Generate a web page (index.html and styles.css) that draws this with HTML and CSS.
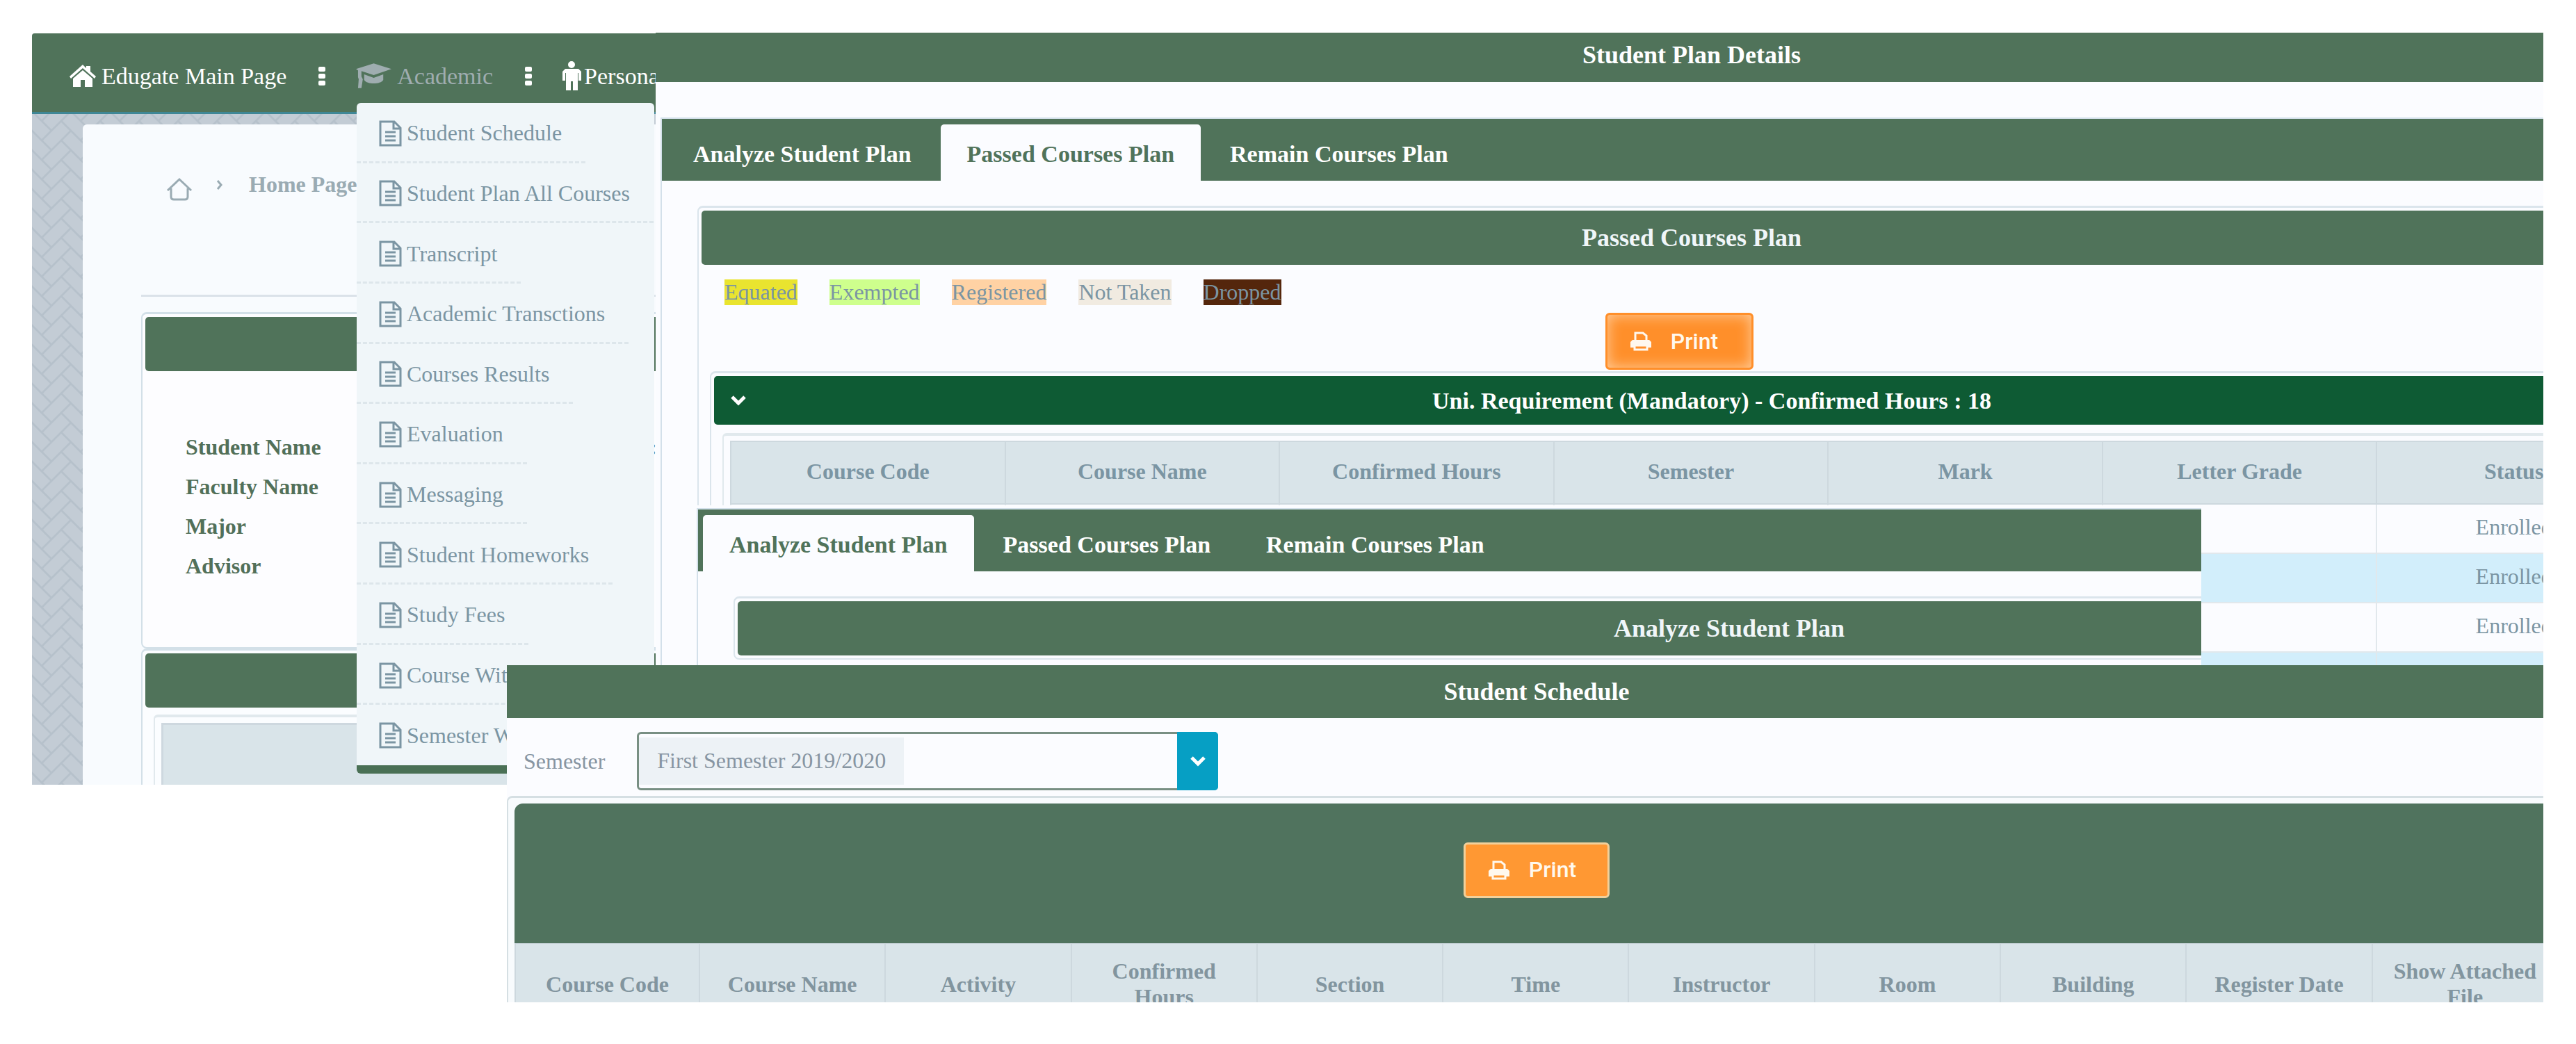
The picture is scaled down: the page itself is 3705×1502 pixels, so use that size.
FILE: index.html
```html
<!DOCTYPE html>
<html lang="en">
<head>
<meta charset="utf-8">
<title>Edugate</title>
<link rel="stylesheet" href="styles.css">
</head>
<body>
<svg class="sprite" aria-hidden="true">
  <symbol id="i-doc" viewBox="0 0 33 38"><path d="M2 2h20l9 9v25H2zM21 2v10h10" fill="none" stroke="currentColor" stroke-width="3"/><path d="M9 17h15M9 23h15M9 29h15" stroke="currentColor" stroke-width="3"/></symbol>
  <symbol id="i-home" viewBox="0 0 38 32"><path d="M19 0 24 5V2h6v8l8 7-2 3L19 5 2 20l-2-3z" fill="currentColor"/><path d="M19 8 33 20v12H22V22h-6v10H5V20z" fill="currentColor"/></symbol>
  <symbol id="i-cap" viewBox="0 0 52 36"><path d="M26 0 52 8 26 17 8 11v8l2 4-2 13H3l1-13-1-3V10L0 8z" fill="currentColor"/><path d="M12 16l14 5 14-5v8c-4 7-24 7-28 0z" fill="currentColor"/></symbol>
  <symbol id="i-man" viewBox="0 0 27 42"><circle cx="13" cy="5" r="5" fill="currentColor"/><path d="M4 11h19l4 4v13h-4V17h-1v25h-7V29h-3v13H5V17H4v11H0V15z" fill="currentColor"/></symbol>
  <symbol id="i-print" viewBox="0 0 30 28"><path d="M7 13V2h11l5 4v7" fill="none" stroke="currentColor" stroke-width="3"/><path d="M3 12h24l3 3v8h-5v-4H5v4H0v-8z" fill="currentColor"/><path d="M6 20h18v6H6z" fill="none" stroke="currentColor" stroke-width="3"/></symbol>
  <symbol id="i-down" viewBox="0 0 24 16"><path d="M3 3l9 9 9-9" fill="none" stroke="currentColor" stroke-width="5"/></symbol>
</svg>
<main class="desktop">

  <section class="win win-portal">
    <nav class="topnav">
      <a href="#"><svg class="ic-home"><use href="#i-home"/></svg>Edugate Main Page</a>
      <span class="dots"><i></i><i></i><i></i></span>
      <a href="#" class="current"><svg class="ic-cap"><use href="#i-cap"/></svg>Academic</a>
      <span class="dots"><i></i><i></i><i></i></span>
      <a href="#" class="tight"><svg class="ic-man"><use href="#i-man"/></svg>Personal</a>
    </nav>
    <div class="sheet">
      <div class="crumbs">
        <svg class="ic-crumb" viewBox="0 0 38 34"><path d="M2 19 19 3l17 16M7 16v12q0 4 4 4h16q4 0 4-4V16" fill="none" stroke="currentColor" stroke-width="3"/></svg>
        <svg class="ic-sep" viewBox="0 0 10 16"><path d="M2 2l5 6-5 6" fill="none" stroke="currentColor" stroke-width="3"/></svg>
        <a href="#">Home Page</a>
      </div>
      <div class="frame frame-info">
        <div class="bar"></div>
        <table class="info">
          <tr><th scope="row">Student Name</th><td>:</td></tr>
          <tr><th scope="row">Faculty Name</th><td></td></tr>
          <tr><th scope="row">Major</th><td></td></tr>
          <tr><th scope="row">Advisor</th><td></td></tr>
        </table>
      </div>
      <div class="frame frame-list">
        <div class="bar"></div>
        <div class="subframe"><div class="blank-head"></div></div>
      </div>
    </div>
    <ul class="menu">
      <li><a href="#"><svg><use href="#i-doc"/></svg>Student Schedule</a></li>
      <li><a href="#"><svg><use href="#i-doc"/></svg>Student Plan All Courses</a></li>
      <li><a href="#"><svg><use href="#i-doc"/></svg>Transcript</a></li>
      <li><a href="#"><svg><use href="#i-doc"/></svg>Academic Transctions</a></li>
      <li><a href="#"><svg><use href="#i-doc"/></svg>Courses Results</a></li>
      <li><a href="#"><svg><use href="#i-doc"/></svg>Evaluation</a></li>
      <li><a href="#"><svg><use href="#i-doc"/></svg>Messaging</a></li>
      <li><a href="#"><svg><use href="#i-doc"/></svg>Student Homeworks</a></li>
      <li><a href="#"><svg><use href="#i-doc"/></svg>Study Fees</a></li>
      <li><a href="#"><svg><use href="#i-doc"/></svg>Course Withdraw</a></li>
      <li><a href="#"><svg><use href="#i-doc"/></svg>Semester Withdraw</a></li>
    </ul>
  </section>

  <section class="win win-plan">
    <div class="plan-page">
      <h1 class="title">Student Plan Details</h1>
      <div class="tabbox">
        <div class="tabs" role="tablist">
          <button role="tab" aria-selected="false">Analyze Student Plan</button>
          <button role="tab" aria-selected="true">Passed Courses Plan</button>
          <button role="tab" aria-selected="false">Remain Courses Plan</button>
        </div>
        <div class="tabpane">
          <div class="frame">
            <h2 class="bar">Passed Courses Plan</h2>
            <div class="legend">
              <span class="l-equated">Equated</span>
              <span class="l-exempted">Exempted</span>
              <span class="l-registered">Registered</span>
              <span class="l-nottaken">Not Taken</span>
              <span class="l-dropped">Dropped</span>
            </div>
            <div class="actions"><button class="print glow"><svg><use href="#i-print"/></svg>Print</button></div>
            <div class="frame group">
              <h3 class="group-title"><svg><use href="#i-down"/></svg><span>Uni. Requirement (Mandatory) - Confirmed Hours : 18</span></h3>
              <div class="subframe">
                <table class="grid">
                  <thead><tr><th>Course Code</th><th>Course Name</th><th>Confirmed Hours</th><th>Semester</th><th>Mark</th><th>Letter Grade</th><th>Status</th></tr></thead>
                  <tbody>
                    <tr><td></td><td></td><td></td><td></td><td></td><td></td><td>Enrolled</td></tr>
                    <tr><td></td><td></td><td></td><td></td><td></td><td></td><td>Enrolled</td></tr>
                    <tr><td></td><td></td><td></td><td></td><td></td><td></td><td>Enrolled</td></tr>
                    <tr><td></td><td></td><td></td><td></td><td></td><td></td><td></td></tr>
                  </tbody>
                </table>
              </div>
            </div>
          </div>
        </div>
      </div>
    </div>
  </section>

  <section class="win win-analyze">
    <div class="analyze-page">
      <div class="tabbox">
        <div class="tabs" role="tablist">
          <button role="tab" aria-selected="true">Analyze Student Plan</button>
          <button role="tab" aria-selected="false">Passed Courses Plan</button>
          <button role="tab" aria-selected="false">Remain Courses Plan</button>
        </div>
        <div class="tabpane">
          <div class="frame"><h2 class="bar">Analyze Student Plan</h2></div>
        </div>
      </div>
    </div>
  </section>

  <section class="win win-schedule">
    <div class="schedule-page">
      <h1 class="bar title-schedule">Student Schedule</h1>
      <div class="filter">
        <label for="sem">Semester</label>
        <div class="picker">
          <select id="sem"><option>First Semester 2019/2020</option></select>
          <span class="picker-arrow"><svg><use href="#i-down"/></svg></span>
        </div>
      </div>
      <div class="schedule-box">
        <div class="toolbar"><button class="print"><svg><use href="#i-print"/></svg>Print</button></div>
        <table class="grid schedule">
          <thead><tr><th>Course Code</th><th>Course Name</th><th>Activity</th><th>Confirmed Hours</th><th>Section</th><th>Time</th><th>Instructor</th><th>Room</th><th>Building</th><th>Register Date</th><th>Show Attached File</th></tr></thead>
        </table>
      </div>
    </div>
  </section>

</main>
</body>
</html>
```

FILE: styles.css
```css
* { box-sizing: border-box; }

body {
  margin: 0;
  background: #fff;
  font: 32px/37px "Liberation Serif", "Times New Roman", serif;
  color: #7b95a3;
}

h1, h2, h3 { margin: 0; }
a { color: inherit; text-decoration: none; }
button { font: inherit; cursor: pointer; }
svg { flex: none; display: block; }
.sprite { position: absolute; width: 0; height: 0; }

.desktop {
  position: relative;
  min-height: 100vh;
  overflow: hidden;
}

.win {
  position: absolute;
  overflow: hidden;
  background: #fbfcff;
}

/* shared pieces */
.bar {
  display: flex;
  align-items: center;
  justify-content: center;
  height: 78px;
  border-radius: 5px;
  background: #50735a;
  color: #f0f6f9;
  font-size: 36px;
  font-weight: bold;
}

.frame {
  padding: 4px;
  border: 2px solid #dbe5ec;
  border-top-width: 3px;
  border-radius: 8px;
}

.subframe {
  padding: 9px;
  border: 2px solid #e1e9ed;
  border-top-width: 4px;
  border-radius: 6px;
}

.print {
  display: flex;
  align-items: center;
  gap: 28px;
  height: 80px;
  padding: 0 45px 0 33px;
  border: 3px solid #f1d09b;
  border-radius: 6px;
  background: #ff9833;
  color: #fff8ee;
  font: 500 32px/37px Roboto, sans-serif;
}
.print svg { width: 30px; height: 28px; }
.print.glow {
  height: 82px;
  padding-right: 48px;
  border-color: #ff8f2a;
  background: #ff8f2a;
  box-shadow: inset 0 0 20px #ffd0a0;
}

/* portal window */
.win-portal {
  left: 46px;
  top: 48px;
  width: 897px;
  height: 1081px;
  background-color: #c3ccd5;
  background-image: url("data:image/svg+xml,%3Csvg xmlns='http://www.w3.org/2000/svg' width='56' height='28' viewBox='0 0 4 2'%3E%3Cpath d='M0 0L2 2L1 3L-1 1zM0-2L2 0L1 1L-1-1zM4 0L6 2L5 3L3 1zM4-2L6 0L5 1L3-1zM3 1L4 2L2 4L1 3zM3-1L4 0L2 2L1 1zM-1 1L0 2' fill='none' stroke='%23b6c1cb' stroke-width='.2'/%3E%3C/svg%3E");
  border-radius: 4px 0 0 0;
}

.topnav {
  display: flex;
  align-items: center;
  height: 116px;
  padding: 9px 0 0 54px;
  border-bottom: 3px solid #3f8796;
  background: #50735a;
  color: #fff;
  font-size: 34px;
  white-space: nowrap;
}
.topnav a { display: flex; align-items: center; gap: 8px; }
.topnav .current { color: #9fadb0; }
.topnav .tight { gap: 4px; }
.ic-home { width: 38px; height: 32px; }
.ic-cap { width: 51px; height: 36px; }
.ic-man { width: 27px; height: 42px; }
.dots { display: grid; gap: 3px; margin: 0 44px 0 46px; }
.dots i { width: 10px; height: 7px; border-radius: 2px; background: #fff; }

.sheet {
  width: 900px;
  height: 950px;
  margin: 15px 0 0 73px;
  padding-left: 84px;
  border-radius: 6px 0 0 0;
  background: #f8fbfe;
}

.crumbs {
  display: flex;
  align-items: center;
  height: 248px;
  padding: 0 0 72px 36px;
  border-bottom: 3px solid #dbe2e9;
  color: #9aabb3;
  font-weight: bold;
}
.ic-crumb { width: 38px; height: 34px; margin-top: 12px; }
.ic-sep { width: 10px; height: 16px; margin: 0 37px 0 34px; }

.frame-info { height: 484px; margin-top: 22px; background: #fdfdff; border-color: #d3e0e8; }
.frame-list { background: #fbfdff; border-color: #d3e0e8; }
.frame-list .subframe { margin: 10px 0 0 12px; padding-top: 8px; }
.blank-head { height: 120px; border: 3px solid #ced8df; background: #d9e4e9; }

.info {
  margin: 81px 0 0 58px;
  border-spacing: 0;
  color: #527059;
}
.info th { width: 667px; height: 57px; padding: 0; text-align: left; }
.info td { padding: 0; font-weight: bold; }

.menu {
  position: absolute;
  left: 467px;
  top: 100px;
  display: grid;
  grid-auto-rows: 1fr;
  width: 428px;
  height: 965px;
  margin: 0;
  padding: 0;
  border-bottom: 12px solid #4a7055;
  border-radius: 6px;
  background: #f0f6f9;
  list-style: none;
}
.menu li { display: flex; }
.menu a {
  display: flex;
  align-items: center;
  gap: 7px;
  padding: 4px 34px 0 32px;
  border-bottom: 3px dashed #dde6eb;
  white-space: nowrap;
}
.menu li:last-child a { border-color: transparent; }
.menu svg { width: 33px; height: 38px; }

/* plan window */
.win-plan { left: 943px; right: 47px; top: 47px; height: 912px; }
.plan-page { width: calc(100% + 265px); }
.title {
  height: 71px;
  padding-top: 14px;
  background: #50735a;
  color: #fff;
  font-size: 36px;
  text-align: center;
}

.win-plan .tabbox { margin: 51px 7px 0; border: 2px solid #d3e0ea; border-bottom: 0; }
.tabs {
  display: flex;
  gap: 4px;
  height: 89px;
  padding: 8px 7px 0;
  background: #50735a;
}
.tabs button {
  padding: 3px 38px 0;
  border: 0;
  border-radius: 5px 5px 0 0;
  background: none;
  color: #fff;
  font-size: 34px;
  font-weight: bold;
  white-space: nowrap;
}
.tabs [aria-selected="true"] { background: #fbfcff; color: #50735a; }
.tabpane { padding: 36px 51px; }

.legend { display: flex; gap: 46px; padding: 21px 33px 0; }
.l-equated { background: #e9e42f; }
.l-exempted { background: #ceff8d; }
.l-registered { background: #ffd2a4; }
.l-nottaken { background: #f1ebe1; }
.l-dropped { background: #54260c; }

.actions { display: flex; justify-content: center; padding: 11px 35px 0 0; }

.group { margin: 2px 12px 0; }
.group-title {
  display: flex;
  align-items: center;
  height: 70px;
  border-radius: 5px;
  background: #0e5b34;
  color: #fff;
  font-size: 34px;
}
.group-title svg { width: 24px; height: 16px; margin: 0 11px 0 23px; }
.group-title span { flex: 1; text-align: center; }
.group .subframe { margin: 12px 14px 0 12px; padding-top: 7px; }

.grid { width: 100%; table-layout: fixed; border-collapse: collapse; }
.grid th, .grid td { padding: 0 0 4px; text-align: center; }
.grid th {
  height: 90px;
  border: 2px solid #cdd8de;
  background: #d9e4e9;
}
.grid td { height: 71px; border: 2px solid #e1e8ec; }
.grid tbody tr:nth-child(even) { background: #d2eefb; }

/* analyze window */
.win-analyze { left: 1002px; width: 2164px; top: 727px; height: 240px; }
.analyze-page { width: calc(100% + 806px); }
.win-analyze .tabbox { margin-top: 4px; border: 2px solid #d3e0ea; border-bottom: 0; }

/* schedule window */
.win-schedule { left: 729px; right: 47px; top: 957px; height: 485px; }
.schedule-page { width: calc(100% + 33px); }
.title-schedule { height: 76px; border-radius: 0; color: #fff; }
.filter { display: flex; align-items: center; gap: 46px; padding: 20px 24px 8px; color: #8795a2; }

.picker { position: relative; width: 836px; }
.picker select {
  display: block;
  width: 100%;
  height: 84px;
  padding: 0 80px 2px 26px;
  border: 3px solid #788f83;
  border-radius: 6px;
  background: linear-gradient(#edf2f6, #edf2f6) 0 50% / 381px 68px no-repeat #fbfcff;
  color: inherit;
  font: inherit;
  appearance: none;
}
.picker-arrow {
  position: absolute;
  top: 0;
  right: 0;
  bottom: 0;
  display: grid;
  place-items: center;
  width: 59px;
  border-radius: 0 5px 5px 0;
  background: #069fc4;
  color: #fff;
  pointer-events: none;
}
.picker-arrow svg { width: 24px; height: 16px; }

.schedule-box {
  padding: 8px 9px 0;
  border: 2px solid #d5dfe3;
  border-top-width: 3px;
  border-radius: 8px 8px 0 0;
  background: #f8fbfd;
}
.toolbar {
  display: flex;
  align-items: center;
  justify-content: center;
  height: 201px;
  padding-bottom: 10px;
  border-radius: 12px 12px 0 0;
  background: #50735e;
}
.schedule th { height: 118px; padding: 0 20px; color: #82959f; border-top-width: 1px; }
.schedule th:first-child { width: 265px; }
```
